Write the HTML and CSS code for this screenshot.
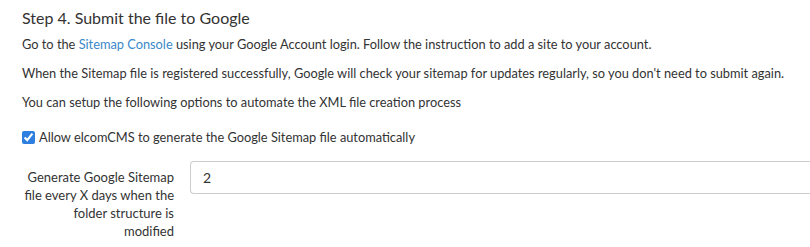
FILE: index.html
```html
<!DOCTYPE html>
<html lang="en">
<head>
    <meta charset="UTF-8">
    <title>Sitemap - Step 4</title>
    <link rel="stylesheet" href="styles.css">
</head>
<body>
    <div class="step">
        <h3>Step 4. Submit the file to Google</h3>
        <p>Go to the <a href="#">Sitemap Console</a> using your Google Account login. Follow the instruction to add a site to your account.</p>
        <p>When the Sitemap file is registered successfully, Google will check your sitemap for updates regularly, so you don't need to submit again.</p>
        <p>You can setup the following options to automate the XML file creation process</p>

        <label class="check">
            <input type="checkbox" checked>
            <span>Allow elcomCMS to generate the Google Sitemap file automatically</span>
        </label>

        <div class="form-row">
            <label class="form-label" for="days">Generate Google Sitemap file every X days when the folder structure is modified</label>
            <input class="form-input" id="days" type="text" value="2">
        </div>
    </div>
</body>
</html>
```

FILE: styles.css
```css
body {
    font-family: Lato, "Open Sans", sans-serif;
    color: #333;
    background: #fff;
    margin: 0;
    padding: 0;
    overflow: hidden;
}
.step {
    padding: 8px 0 0 22px;
}
h3 {
    font-size: 16px;
    font-weight: 400;
    margin: 0 0 7px;
    line-height: 20px;
}
p {
    font-size: 12.8px;
    line-height: 18px;
    margin: 0 0 11px;
}
a {
    color: #3a88c9;
    text-decoration: none;
}
.check {
    display: flex;
    align-items: center;
    gap: 4px;
    font-size: 12.8px;
    margin-top: 18px;
}
.check input {
    margin: 0;
    width: 13px;
    height: 13px;
    accent-color: #2f7fe0;
}
.form-row {
    display: flex;
    align-items: flex-start;
    gap: 16px;
    margin-top: 16px;
}
.form-label {
    flex: 0 0 152px;
    padding-top: 7px;
    text-align: right;
    font-size: 13px;
    line-height: 18px;
}
.form-input {
    flex: 1;
    min-width: 0;
    height: 33px;
    box-sizing: border-box;
    border: 1px solid #ccc;
    border-right: none;
    border-radius: 4px 0 0 4px;
    padding: 0 12px;
    font-family: Lato, sans-serif;
    font-size: 14px;
    color: #333;
}
```
